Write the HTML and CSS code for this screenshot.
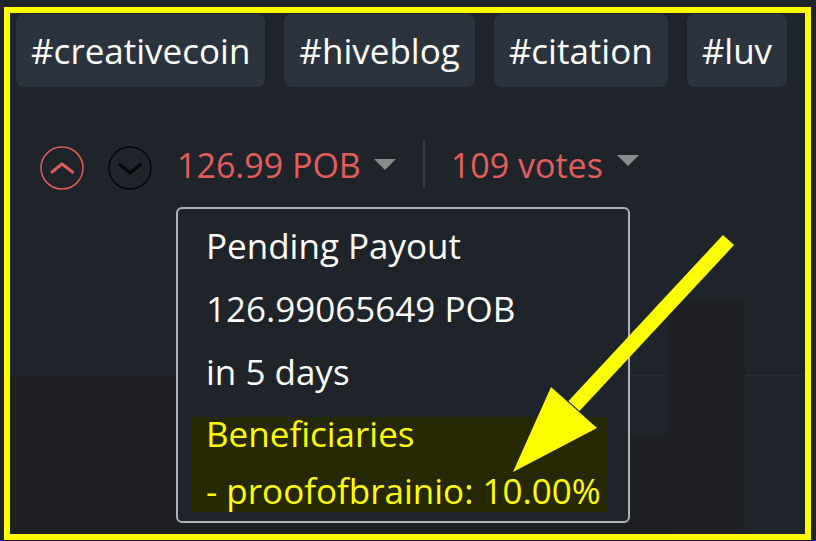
FILE: index.html
```html
<!DOCTYPE html>
<html lang="en">
<head>
  <meta charset="UTF-8">
  <title>Pending Payout</title>
  <link rel="stylesheet" href="styles.css">
</head>
<body>

  <div class="frame">
    <div class="tags">
      <a class="tag" href="#">#creativecoin</a>
      <a class="tag" href="#">#hiveblog</a>
      <a class="tag" href="#">#citation</a>
      <a class="tag" href="#">#luv</a>
    </div>

    <div class="votes-row">
      <span class="vote up">
        <svg width="44" height="44" viewBox="0 0 44 44">
          <circle cx="22" cy="22" r="21" fill="none" stroke="#e35d5d" stroke-width="1.5"/>
          <path d="M12 26 L22 18 L32.5 26" fill="none" stroke="#e35d5d" stroke-width="3" stroke-linecap="round" stroke-linejoin="round"/>
        </svg>
      </span>
      <span class="vote down">
        <svg width="44" height="44" viewBox="0 0 44 44">
          <circle cx="22" cy="22" r="21" fill="none" stroke="#050608" stroke-width="1.5"/>
          <path d="M12 18.5 L22 27 L32.5 18.5" fill="none" stroke="#050608" stroke-width="3" stroke-linecap="round" stroke-linejoin="round"/>
        </svg>
      </span>
      <span class="amount">126.99 POB</span>
      <span class="caret"></span>
      <span class="sep"></span>
      <span class="amount">109 votes</span>
      <span class="caret caret-high"></span>
    </div>

    <div class="backdrop">
      <div class="col col-left"></div>
      <div class="col col-mid"></div>
      <div class="col col-block"></div>
      <div class="col col-right"></div>
    </div>

    <!-- payout tooltip -->
    <div class="tooltip">
      <div class="line">Pending Payout</div>
      <div class="line">126.99065649 POB</div>
      <div class="line">in 5 days</div>
      <div class="benef">
        <div class="benef-line">Beneficiaries</div>
        <div class="benef-line second">- proofofbrainio: 10.00%</div>
      </div>
    </div>

    <svg class="arrow" width="816" height="541" viewBox="0 0 816 541">
      <line x1="728.5" y1="240" x2="574" y2="406" stroke="#ffff00" stroke-width="15"/>
      <polygon points="551,387 597,428 513,472" fill="#ffff00"/>
    </svg>
  </div>

</body>
</html>
```

FILE: styles.css
```css
body {
  margin: 0;
  background-color: #1f232a;
  font-family: "Open Sans", "Noto Sans", sans-serif;
}

.frame {
  position: relative;
  display: flex;
  flex-direction: column;
  box-sizing: border-box;
  width: 807px;
  height: 533px;
  margin: 7px 0 0 4px;
  border: 6px solid #ffff00;
  padding-top: 1px;
  overflow: hidden;
  background-color: #1f232a;
}

.tags {
  display: flex;
  gap: 19px;
  padding-left: 6px;
}

.tag {
  display: flex;
  align-items: center;
  height: 73px;
  padding: 0 15px;
  border-radius: 8px;
  background-color: #2b343e;
  color: #ffffff;
  text-decoration: none;
  font-size: 35px;
}

.votes-row {
  display: flex;
  align-items: center;
  height: 56px;
  margin-top: 53px;
  padding-left: 30px;
}

.vote {
  display: flex;
  width: 44px;
  height: 44px;
}

.vote.up {
  margin-right: 24px;
}

.vote.down {
  margin-right: 25px;
}

.amount {
  color: #e35d5d;
  font-size: 34px;
  margin-bottom: 6px;
}

.caret {
  width: 0;
  height: 0;
  border-left: 11px solid transparent;
  border-right: 11px solid transparent;
  border-top: 11px solid #8a8a8a;
  margin-left: 13px;
  margin-bottom: 7px;
}

.caret-high {
  margin-left: 14px;
  margin-bottom: 16px;
}

.sep {
  width: 2px;
  height: 48px;
  background-color: #343a43;
  margin: 0 26px 8px 27px;
}

.backdrop {
  flex: 1;
  display: grid;
  grid-template-columns: 620px 37px 79px 1fr;
}

.col-left {
  background: linear-gradient(to bottom, transparent 180px, #1e1f23 180px);
}

.col-mid {
  background: linear-gradient(to bottom, transparent 179px, #282d34 179px, #282d34 180px, transparent 180px, transparent 239px, #1e1f23 239px);
}

.col-block {
  background: linear-gradient(to bottom, transparent 102px, #1e2024 102px);
}

.col-right {
  background: linear-gradient(to bottom, transparent 179px, #282d34 179px, #282d34 180px, transparent 180px);
}

.tooltip {
  position: absolute;
  left: 166px;
  top: 194px;
  box-sizing: border-box;
  width: 454px;
  height: 316px;
  padding: 5px 20px 0 28px;
  border: 2px solid #a9b0b8;
  border-radius: 6px;
  background-color: #1f232a;
  color: #ffffff;
  font-size: 35px;
}

.line {
  line-height: 63px;
}

.benef {
  margin: 14px 0 0 -15px;
  padding: 0 0 4px 15px;
  background-color: #262900;
  color: #ffff00;
}

.benef-line {
  line-height: 34px;
  white-space: nowrap;
}

.benef-line.second {
  margin-top: 23px;
}

.arrow {
  position: absolute;
  left: -10px;
  top: -13px;
}
```
